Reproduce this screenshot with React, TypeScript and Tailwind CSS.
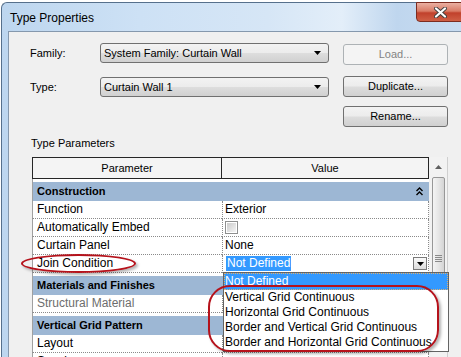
import type { ReactNode } from 'react';

type Row =
  | { kind: 'group'; label: string; collapse?: boolean }
  | { kind: 'param'; label: string; value?: ReactNode; muted?: boolean };

const winBtn =
  'rounded-[3px] border border-[#707070] bg-[linear-gradient(#f3f3f3,#ececec_48%,#dddddd_52%,#d0d0d0)]';

function DownArrow() {
  return (
    <svg width="7" height="4" viewBox="0 0 7 4">
      <path d="M0 0h7L3.5 4z" fill="#000" />
    </svg>
  );
}

function Select({ value }: { value: string }) {
  return (
    <div className={`flex h-[20px] w-[229px] items-center justify-between pl-[3px] pr-[7px] ${winBtn}`}>
      <span>{value}</span>
      <DownArrow />
    </div>
  );
}

function Button({ children, disabled }: { children: string; disabled?: boolean }) {
  return (
    <div
      className={`flex h-[21px] w-[105px] items-center justify-center ${
        disabled ? 'rounded-[3px] border border-[#adb2b5] bg-[#f4f4f4] text-[#838383]' : winBtn
      }`}
    >
      {children}
    </div>
  );
}

function Checkbox() {
  return (
    <div className="h-[13px] w-[13px] border border-[#8e8f8f] bg-white p-[1px]">
      <div className="h-full w-full bg-[linear-gradient(135deg,#cbcbcb,#f4f4f4)]" />
    </div>
  );
}

function JoinCombo() {
  return (
    <div className="flex h-full w-full items-center pr-[1px]">
      <span className="ml-[1px] bg-[#3399ff] px-[1px] leading-[15px] text-white">Not Defined</span>
      <div className="ml-auto flex h-[13px] w-[14px] items-center justify-center border border-[#7a7a7a] bg-[linear-gradient(#fafafa,#dcdcdc)]">
        <DownArrow />
      </div>
    </div>
  );
}

const rows: Row[] = [
  { kind: 'group', label: 'Construction', collapse: true },
  { kind: 'param', label: 'Function', value: 'Exterior' },
  { kind: 'param', label: 'Automatically Embed', value: <Checkbox /> },
  { kind: 'param', label: 'Curtain Panel', value: 'None' },
  { kind: 'param', label: 'Join Condition', value: <JoinCombo /> },
  { kind: 'group', label: 'Materials and Finishes' },
  { kind: 'param', label: 'Structural Material', muted: true },
  { kind: 'group', label: 'Vertical Grid Pattern' },
  { kind: 'param', label: 'Layout' },
  { kind: 'param', label: 'Spacing' },
];

const options = [
  'Vertical Grid Continuous',
  'Horizontal Grid Continuous',
  'Border and Vertical Grid Continuous',
  'Border and Horizontal Grid Continuous',
];

function TableRow({ row }: { row: Row }) {
  if (row.kind === 'group') {
    return (
      <div className="h-[22px] border-l border-[#a0a0a0] bg-white pt-[3px]">
        <div className="flex h-[19px] items-center justify-between bg-[#9db7d4] pl-[4px] pr-[6px] text-[11px] font-bold">
          <span>{row.label}</span>
          {row.collapse && (
            <svg width="7" height="9" viewBox="0 0 7 9">
              <path d="M0.5 4L3.5 1L6.5 4M0.5 8L3.5 5L6.5 8" fill="none" stroke="#000" strokeWidth="1.4" />
            </svg>
          )}
        </div>
      </div>
    );
  }
  return (
    <div className="grid h-[18px] grid-cols-[190px_207px] bg-white">
      <div
        className={`flex items-center border-b border-l border-dotted border-b-[#8a8a8a] border-l-[#a0a0a0] pl-[4px] leading-[17px] ${
          row.muted ? 'text-[#6d6d6d]' : ''
        }`}
        style={{ borderLeftStyle: 'solid' }}
      >
        {row.label}
      </div>
      <div className="flex items-center border-x border-b border-dotted border-[#8a8a8a] pl-[2px] leading-[17px]">
        {row.value}
      </div>
    </div>
  );
}

export default function App() {
  return (
    <div className="relative h-[357px] w-[461px] overflow-hidden bg-white pt-[2px] pl-[1px] font-['Liberation_Sans',Arial,sans-serif] text-black">
      <div className="h-[360px] rounded-tl-[6px] border-l border-t border-[#56708c] bg-[linear-gradient(90deg,#bdd6ef_0%,#cde1f5_30%,#d6e6f6_58%,#e3eef9_74%,#bfd6ee_86%,#c8dcf1_100%)]">
        <div className="flex h-[28px] items-center pl-[8px] pt-[2px] text-[12px]">Type Properties</div>

        <div className="ml-[6px] h-[330px] border-l border-t border-[#8598ad] bg-[#f0f0f0] pl-[21px] pt-[11px] text-[11px]">
          <div className="flex items-start">
            <div className="w-[70px] leading-[20px]">Family:</div>
            <Select value="System Family: Curtain Wall" />
            <div className="ml-[14px] mt-[1px]">
              <Button disabled>Load...</Button>
            </div>
          </div>
          <div className="mt-[11px] flex items-start">
            <div className="w-[70px] pt-[1px] leading-[20px]">Type:</div>
            <div className="mt-[1px]">
              <Select value="Curtain Wall 1" />
            </div>
            <div className="ml-[14px]">
              <Button>Duplicate...</Button>
            </div>
          </div>
          <div className="ml-[313px] mt-[9px]">
            <Button>Rename...</Button>
          </div>

          <div className="ml-[1px] mt-[9px] leading-[14px]">Type Parameters</div>

          <div className="ml-[2px] mt-[7px] flex text-[12px]">
            <div className="w-[397px]">
              <div className="flex h-[22px] border border-[#262626] bg-[#f4f4f4] text-[11px]">
                <div className="flex w-[189px] items-center justify-center border-r border-[#262626]">Parameter</div>
                <div className="flex flex-1 items-center justify-center">Value</div>
              </div>
              {rows.map((row) => (
                <TableRow key={row.label} row={row} />
              ))}
            </div>

            <div className="flex w-[19px] flex-col items-center border-r border-[#cfcfcf] bg-[#f2f2f2]">
              <div className="flex h-[20px] shrink-0 items-center justify-center">
                <svg width="7" height="4" viewBox="0 0 7 4">
                  <path d="M3.5 0L7 4H0z" fill="#606060" />
                </svg>
              </div>
              <div className="flex h-[163px] w-[13px] shrink-0 items-center justify-center rounded-[2px] border border-[#979797] bg-[linear-gradient(90deg,#f4f4f4,#e6e6e6_50%,#d4d4d4)]">
                <div className="flex flex-col gap-[1px]">
                  <div className="h-[1px] w-[7px] bg-[#8a8a8a]" />
                  <div className="h-[1px] w-[7px] bg-[#8a8a8a]" />
                  <div className="h-[1px] w-[7px] bg-[#8a8a8a]" />
                  <div className="h-[1px] w-[7px] bg-[#8a8a8a]" />
                </div>
              </div>
            </div>
          </div>
        </div>
      </div>

      <div className="absolute left-[416px] top-[2px] flex h-[20px] w-[50px] items-center rounded-b-[4px] border border-[#7d2c20] bg-[linear-gradient(#eab0a2,#d97c66_45%,#c1412c_55%,#cf5f45)] pl-[17px]">
        <svg width="13" height="11" viewBox="0 0 13 11">
          <path d="M2 1.5L11 9.5M11 1.5L2 9.5" stroke="#40403f" strokeWidth="4" strokeLinecap="round" />
          <path d="M2 1.5L11 9.5M11 1.5L2 9.5" stroke="#fff" strokeWidth="2.2" strokeLinecap="round" />
        </svg>
      </div>

      <div className="absolute left-[223px] top-[272px] h-[80px] w-[226px] border border-[#646464] bg-white text-[12px] leading-[15px]">
        <div className="border border-dotted border-[#e0b070] bg-[#3399ff] text-white">Not Defined</div>
        {options.map((opt) => (
          <div key={opt} className="pl-[1px]">
            {opt}
          </div>
        ))}
      </div>

      <div className="absolute left-[208px] top-[285px] h-[67px] w-[231px] rounded-[22px] border-2 border-[#b5121b] shadow-[2px_2px_3px_rgba(0,0,0,0.3)]" />
      <div className="absolute left-[21px] top-[254px] h-[19px] w-[115px] rounded-[50%] border-2 border-[#b5121b] shadow-[2px_2px_3px_rgba(0,0,0,0.3)]" />
    </div>
  );
}
